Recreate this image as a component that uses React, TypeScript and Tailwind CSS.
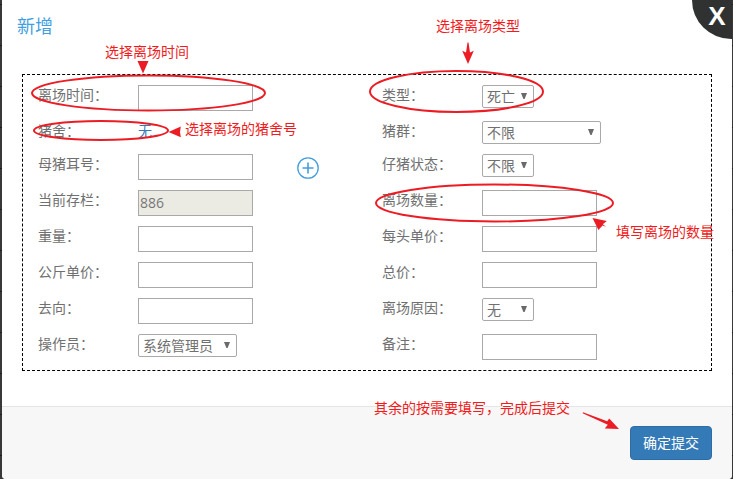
import { useId, useState } from "react";
import type { FormEvent, ReactNode } from "react";

const inputStyle =
  "h-[26px] w-[115px] border border-[#a9a9a9] px-px pb-0.5 font-['Open_Sans','Noto_Sans_CJK_SC',sans-serif] text-sm leading-5 text-[#777] outline-none focus:border-blue-500";

function Row({ children }: { children: ReactNode }) {
  return <div className="mb-2.5 grid grid-cols-2">{children}</div>;
}

interface FieldProps {
  label: string;
  defaultValue?: string;
  readOnly?: boolean;
  children?: ReactNode;
}

function TextField({ label, defaultValue, readOnly, children }: FieldProps) {
  const id = useId();
  return (
    <div className="flex items-start px-[15px]">
      <label htmlFor={id} className="w-[100px] shrink-0 leading-5">
        {label}：
      </label>
      <input
        id={id}
        type="text"
        defaultValue={defaultValue}
        readOnly={readOnly}
        className={`${inputStyle} ${readOnly ? "bg-[#ebebe4]" : "bg-white"}`}
      />
      {children}
    </div>
  );
}

interface SelectFieldProps {
  label: string;
  options: string[];
  width?: string;
}

function SelectField({ label, options, width = "w-[52px]" }: SelectFieldProps) {
  const id = useId();
  return (
    <div className="flex items-start px-[15px]">
      <label htmlFor={id} className="w-[100px] shrink-0 leading-5">
        {label}：
      </label>
      <div className={`grid items-center ${width}`}>
        <select
          id={id}
          className="col-start-1 row-start-1 h-[23px] w-full appearance-none rounded-xs border border-[#a9a9a9] bg-white pl-1 text-sm leading-5 outline-none focus:border-blue-500"
        >
          {options.map((option) => (
            <option key={option}>{option}</option>
          ))}
        </select>
        <svg
          className="pointer-events-none col-start-1 row-start-1 mr-[7px] mb-0.5 h-1.5 w-1.5 justify-self-end"
          viewBox="0 0 6 6"
          fill="#6a6a6a"
        >
          <path d="M0 0h6L3.6 6H2.4z" />
        </svg>
      </div>
    </div>
  );
}

// Red guide marks drawn over the form
function GuideMarks() {
  return (
    <div className="pointer-events-none absolute inset-0 text-sm leading-5 text-[#f01c20]">
      <svg className="h-full w-full" fill="none">
        <g stroke="#ec1c24" strokeWidth="2">
          <ellipse cx="148.5" cy="93" rx="116.5" ry="17.5" />
          <ellipse cx="101" cy="130.5" rx="67" ry="9.5" />
          <ellipse cx="456.5" cy="91.5" rx="86.5" ry="20.5" />
          <ellipse cx="494.5" cy="203" rx="118.5" ry="18.5" />
        </g>
        <g fill="#ec1c24">
          <path d="M137.5 61h11L143 73.5z" />
          <path d="M168.5 132l12.3-5.4-.8 5.4.8 5.2z" />
          <path d="M467.5 42.5h1l1.5 10 3.8-1.7L468 64l-5.8-13.2 3.8 1.7z" />
          <path d="M592.5 218l14.3 3-4 3.2 3.2 2.6-3.4-1.3-4.2 4.6z" />
          <path d="M582.6 413.2l.4-.9 24.2 9 2-2.8L619 429l-14.2-.6 3-3.6z" />
        </g>
      </svg>
      <span className="absolute top-[42px] left-[105px]">选择离场时间</span>
      <span className="absolute top-[16px] left-[436px]">选择离场类型</span>
      <span className="absolute top-[119px] left-[185px]">选择离场的猪舍号</span>
      <span className="absolute top-[222px] left-[616px] whitespace-nowrap">填写离场的数量</span>
      <span className="absolute top-[398px] left-[374px]">其余的按需要填写，完成后提交</span>
    </div>
  );
}

export default function App() {
  const [open, setOpen] = useState(true);

  const handleSubmit = (e: FormEvent) => {
    e.preventDefault();
  };

  return (
    <div className="relative min-h-screen overflow-hidden bg-[repeating-linear-gradient(#383838_0_4px,#1c1c1c_4px_5px,#383838_5px_41px)] pr-px pl-0.5 font-['Noto_Sans','Noto_Sans_CJK_SC',sans-serif] text-sm text-[#707070]">
      {open && (
        <>
          <form onSubmit={handleSubmit} className="overflow-hidden rounded-b bg-white">
            <h1 className="px-[15px] pt-3.5 text-lg leading-6 text-[#429fdf]">新增</h1>

            <div className="mx-5 mt-9 mb-[35px] border border-dashed border-black pt-2.5">
              <Row>
                <TextField label="离场时间" />
                <SelectField label="类型" options={["死亡", "淘汰", "出售"]} />
              </Row>
              <Row>
                <div className="flex items-start px-[15px] leading-5">
                  <span className="w-[100px] shrink-0">猪舍：</span>
                  <a href="#" className="text-[#337ab7]">
                    无
                  </a>
                </div>
                <SelectField label="猪群" options={["不限"]} width="w-[119px]" />
              </Row>
              <Row>
                <TextField label="母猪耳号">
                  <button type="button" aria-label="添加" className="mt-[3px] ml-11">
                    <svg width="22" height="22" viewBox="0 0 22 22" fill="none" stroke="#429fdf">
                      <circle cx="11" cy="11" r="10.2" strokeWidth="1.3" />
                      <path d="M11 5.5v11M5.5 11h11" strokeWidth="1.6" />
                    </svg>
                  </button>
                </TextField>
                <SelectField label="仔猪状态" options={["不限"]} />
              </Row>
              <Row>
                <TextField label="当前存栏" defaultValue="886" readOnly />
                <TextField label="离场数量" />
              </Row>
              <Row>
                <TextField label="重量" />
                <TextField label="每头单价" />
              </Row>
              <Row>
                <TextField label="公斤单价" />
                <TextField label="总价" />
              </Row>
              <Row>
                <TextField label="去向" />
                <SelectField label="离场原因" options={["无"]} />
              </Row>
              <Row>
                <SelectField label="操作员" options={["系统管理员"]} width="w-[99px]" />
                <TextField label="备注" />
              </Row>
            </div>

            <div className="flex justify-end border-t border-[#e5e5e5] bg-[#f7f7f7] px-5 py-[19px]">
              <button
                type="submit"
                className="rounded border border-[#2e6da4] bg-[#337ab7] px-3 py-1.5 text-sm leading-5 text-white hover:bg-[#286090]"
              >
                确定提交
              </button>
            </div>
          </form>

          <button
            type="button"
            aria-label="关闭"
            onClick={() => setOpen(false)}
            className="absolute top-0 right-px h-[39px] w-10 rounded-bl-full bg-[#303232] pb-2 pl-2.5 font-['Liberation_Sans',sans-serif] text-[26px] leading-[30px] font-bold text-white"
          >
            X
          </button>

          <GuideMarks />
        </>
      )}
    </div>
  );
}
